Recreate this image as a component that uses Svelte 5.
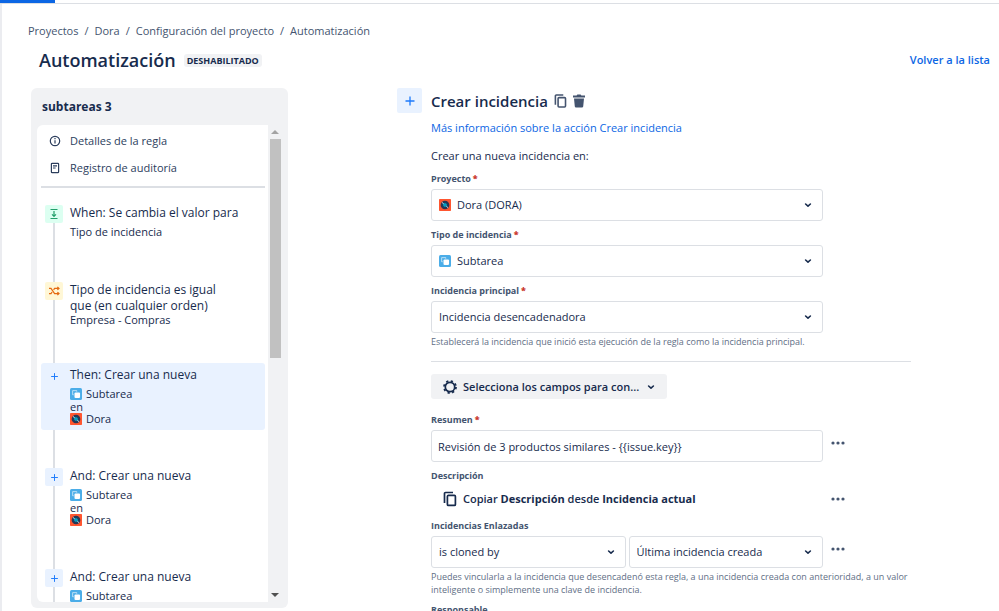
<script>
  const crumbs = ['Proyectos', 'Dora', 'Configuración del proyecto', 'Automatización'];

  const steps = [
    { kind: 'trigger', title: 'When: Se cambia el valor para', detail: 'Tipo de incidencia' },
    { kind: 'condition', title: 'Tipo de incidencia es igual que (en cualquier orden)', detail: 'Empresa - Compras' },
    { kind: 'action', title: 'Then: Crear una nueva', selected: true },
    { kind: 'action', title: 'And: Crear una nueva' },
    { kind: 'action', title: 'And: Crear una nueva' }
  ];

  let summary = $state('Revisión de 3 productos similares - {{issue.key}}');
</script>

{#snippet plus(size)}
  <svg width={size} height={size} viewBox="0 0 12 12" fill="none" stroke="#1d7afc" stroke-width="1.3" aria-hidden="true">
    <path d="M6 1.5v9M1.5 6h9" />
  </svg>
{/snippet}

{#snippet subtask()}
  <svg class="glyph" width="12" height="12" viewBox="0 0 16 16" aria-hidden="true">
    <rect width="16" height="16" rx="2" fill="#4bade8" />
    <path d="M9 5V3.5H3.5V9H5" fill="none" stroke="#fff" stroke-opacity="0.8" stroke-width="1" stroke-linejoin="round" />
    <rect x="6" y="6" width="7.4" height="7.4" rx="1.4" fill="#fff" />
  </svg>
{/snippet}

{#snippet avatar()}
  <svg class="glyph" width="12" height="12" viewBox="0 0 16 16" aria-hidden="true">
    <rect width="16" height="16" rx="1" fill="#ff5630" />
    <circle cx="8" cy="8" r="5.8" fill="#253858" />
    <path d="M4 4.6l2.6 2.2M9.6 9.4l2.4 2.2" stroke="#c1e9f5" stroke-width="1.3" />
    <circle cx="8" cy="8" r="2.4" fill="#00b8d9" />
    <circle cx="8" cy="8" r="0.7" fill="#253858" />
  </svg>
{/snippet}

{#snippet copy(w)}
  <svg width={w} height="16" viewBox="0 0 14 16" fill="none" stroke="currentColor" stroke-width="1.7" aria-hidden="true">
    <path d="M1.5 12V2.5a1 1 0 0 1 1-1H10" />
    <rect x="4.4" y="4.4" width="8" height="10" rx="1" />
  </svg>
{/snippet}

{#snippet chevron()}
  <svg class="chevron" width="8" height="8" viewBox="0 0 8 8" fill="none" stroke="currentColor" stroke-width="1.6" stroke-linecap="round" stroke-linejoin="round" aria-hidden="true">
    <path d="M1.6 3L4 5.2 6.4 3" />
  </svg>
{/snippet}

{#snippet more(name)}
  <button class="more" type="button" aria-label={name}>
    <svg width="14" height="4" viewBox="0 0 14 4" fill="#44546f" aria-hidden="true">
      <circle cx="2" cy="2" r="1.6" /><circle cx="7" cy="2" r="1.6" /><circle cx="12" cy="2" r="1.6" />
    </svg>
  </button>
{/snippet}

<div class="app">
  <div class="topbar"><span class="active-tab"></span></div>
  <div class="page">
    <nav aria-label="Ruta">
      {#each crumbs as crumb, i}
        {#if i}<span class="sep">/</span>{/if}
        <a href="#top">{crumb}</a>
      {/each}
    </nav>

    <header>
      <h1>Automatización</h1>
      <span class="badge">DESHABILITADO</span>
      <a class="back" href="#lista">Volver a la lista</a>
    </header>

    <div class="columns">
      <aside>
        <h2>subtareas 3</h2>
        <div class="scroller">
          <div class="rule">
            <a class="info" href="#detalles">
              <svg width="12" height="12" viewBox="0 0 12 12" fill="none" stroke="#2c3e5d" stroke-width="1.2" aria-hidden="true">
                <circle cx="6" cy="6" r="4.7" /><path d="M6 5.2v3.4M6 3.1v1.2" />
              </svg>
              Detalles de la regla
            </a>
            <a class="info" href="#registro">
              <svg width="12" height="12" viewBox="0 0 12 12" fill="none" stroke="#2c3e5d" stroke-width="1.2" aria-hidden="true">
                <rect x="2.4" y="1.3" width="7.2" height="9.4" rx="0.8" /><path d="M4 3.8h4M4 6h2.6" />
              </svg>
              Registro de auditoría
            </a>
            <ol>
              {#each steps as step}
                <li class={step.kind} class:selected={step.selected}>
                  <span class="tile">
                    {#if step.kind === 'trigger'}
                      <svg width="10" height="12" viewBox="0 0 10 12" fill="none" stroke="#22a06b" stroke-width="1.2" aria-hidden="true">
                        <path d="M1.5 1.5h7M1.5 10.5h7M5 3v5.2M3 6.4l2 2 2-2" />
                      </svg>
                    {:else if step.kind === 'condition'}
                      <svg width="12" height="12" viewBox="0 0 12 12" fill="none" stroke="#e56910" stroke-width="1.2" aria-hidden="true">
                        <path d="M1 3.4h2l3.6 5.2H11M1 8.6h2l1.1-1.6M5.6 4.9l1-1.5H11M9.4 1.9L11 3.4 9.4 4.9M9.4 7.1L11 8.6l-1.6 1.5" />
                      </svg>
                    {:else}
                      {@render plus(9)}
                    {/if}
                  </span>
                  <div class="body">
                    <h3>{step.title}</h3>
                    {#if step.detail}
                      <p class="detail">{step.detail}</p>
                    {:else}
                      <p class="type">{@render subtask()}Subtarea</p>
                      <p>en</p>
                      <p>{@render avatar()}Dora</p>
                    {/if}
                  </div>
                </li>
              {/each}
            </ol>
          </div>
          <div class="bar" aria-hidden="true">
            <span class="up"></span>
            <span class="thumb"></span>
            <span class="down"></span>
          </div>
        </div>
      </aside>

      <main>
        <div class="editor">
          <span class="bigtile">{@render plus(12)}</span>
          <form onsubmit={(e) => e.preventDefault()}>
            <div class="heading">
              <h2>Crear incidencia</h2>
              <button type="button" aria-label="Duplicar">{@render copy(13)}</button>
              <button type="button" aria-label="Eliminar">
                <svg width="12" height="14" viewBox="0 0 12 14" fill="currentColor" aria-hidden="true">
                  <path d="M0 1.6h3.6L4.4.6h3.2l.8 1H12v1.9H0zM1 4.4h10l-.8 8a1.2 1.2 0 0 1-1.2 1.1H3a1.2 1.2 0 0 1-1.2-1.1z" />
                </svg>
              </button>
            </div>
            <a class="learn" href="#ayuda">Más información sobre la acción Crear incidencia</a>
            <p class="intro">Crear una nueva incidencia en:</p>

            <div class="field">
              <label for="project">Proyecto<b>*</b></label>
              <div class="select icon">
                {@render avatar()}
                <select id="project"><option>Dora (DORA)</option></select>
                {@render chevron()}
              </div>
            </div>
            <div class="field">
              <label for="type">Tipo de incidencia<b>*</b></label>
              <div class="select icon">
                {@render subtask()}
                <select id="type"><option>Subtarea</option></select>
                {@render chevron()}
              </div>
            </div>
            <div class="field">
              <label for="parent">Incidencia principal<b>*</b></label>
              <div class="select">
                <select id="parent"><option>Incidencia desencadenadora</option></select>
                {@render chevron()}
              </div>
              <p class="help">Establecerá la incidencia que inició esta ejecución de la regla como la incidencia principal.</p>
            </div>

            <hr />

            <button class="picker" type="button">
              <svg width="14" height="14" viewBox="0 0 14 14" fill="none" stroke="currentColor" aria-hidden="true">
                <circle cx="7" cy="7" r="4.7" stroke-width="1.7" />
                <circle cx="7" cy="7" r="6" stroke-width="1.8" stroke-dasharray="2.2 2.51" stroke-dashoffset="-0.1" />
              </svg>
              <span>Selecciona los campos para con...</span>
              {@render chevron()}
            </button>

            <div class="field">
              <label for="summary">Resumen<b>*</b></label>
              <div class="row">
                <input id="summary" type="text" bind:value={summary} />
                {@render more('Opciones de Resumen')}
              </div>
            </div>
            <div class="field">
              <h4>Descripción</h4>
              <div class="row">
                <p class="copied">{@render copy(14)}<span>Copiar <strong>Descripción</strong> desde <strong>Incidencia actual</strong></span></p>
                {@render more('Opciones de Descripción')}
              </div>
            </div>
            <div class="field">
              <label for="link">Incidencias Enlazadas</label>
              <div class="row">
                <div class="pair">
                  <div class="select">
                    <select id="link"><option>is cloned by</option></select>
                    {@render chevron()}
                  </div>
                  <div class="select">
                    <select aria-label="Incidencia enlazada"><option>Última incidencia creada</option></select>
                    {@render chevron()}
                  </div>
                </div>
                {@render more('Opciones de Incidencias Enlazadas')}
              </div>
              <p class="help">Puedes vincularla a la incidencia que desencadenó esta regla, a una incidencia creada con anterioridad, a un valor inteligente o simplemente una clave de incidencia.</p>
            </div>
            <div class="field">
              <h4>Responsable</h4>
            </div>
          </form>
        </div>
      </main>
    </div>
  </div>
</div>

<style>
  :global(body) { margin: 0; background: #fff; }
  .app {
    box-sizing: border-box;
    display: flex;
    flex-direction: column;
    height: 100vh;
    overflow: hidden;
    font: 11px/14px "Open Sans", "Noto Sans", sans-serif;
    color: #172b4d;
  }
  .app :global(*) { box-sizing: border-box; }
  h1, h2, h3, h4, p, ol { margin: 0; padding: 0; font-weight: 400; }
  a { color: #0c66e4; text-decoration: none; }
  button, input, select { font: inherit; color: inherit; margin: 0; }
  button { display: flex; align-items: center; border: 0; padding: 0; background: none; }
  svg { display: block; flex: none; }

  .topbar { flex: none; height: 4px; border-bottom: 1px solid #dcdfe4; }
  .active-tab { display: block; width: 55px; height: 3px; background: #0c66e4; }
  .page {
    flex: 1;
    min-height: 0;
    display: flex;
    flex-direction: column;
    border-left: 2px solid #ebecf0;
    padding: 20px 0 3px 26px;
  }
  nav { display: flex; gap: 6px; }
  nav a, .sep { color: #44546f; }
  header { display: flex; align-items: center; height: 24px; margin: 10px 9px 16px 11px; }
  h1 { font-size: 18px; line-height: 24px; font-weight: 600; }
  .badge {
    margin-left: 8px;
    padding: 0 3px;
    border-radius: 3px;
    background: #f1f2f4;
    font-size: 9px;
    line-height: 13px;
    font-weight: 700;
  }
  .back { margin-left: auto; font-weight: 600; }

  .columns { flex: 1; min-height: 0; display: flex; }
  aside {
    display: flex;
    flex-direction: column;
    flex: 0 0 257px;
    margin-left: 3px;
    padding: 0 6px 6px;
    border-radius: 6px;
    background: #f1f2f4;
  }
  aside h2 { padding: 10px 5px 9px; font-size: 12px; line-height: 18px; font-weight: 700; }
  .scroller { flex: 1; min-height: 0; display: flex; }
  .rule { flex: 1; padding: 2px 3px 0 4px; border-radius: 6px 0 0 6px; background: #fff; overflow: hidden; }
  .info { display: flex; align-items: center; gap: 9px; height: 27px; padding-left: 8px; color: #2c3e5d; }
  ol { position: relative; list-style: none; margin-top: 5px; padding-top: 13px; border-top: 2px solid #dcdfe4; }
  ol::before { content: ""; position: absolute; top: 20px; bottom: 0; left: 12px; width: 2px; background: #dcdfe4; }
  li { position: relative; display: flex; gap: 7px; margin-bottom: 34px; padding: 4px 24px 5px 4px; border-radius: 3px; }
  li.condition { margin-bottom: 32px; padding-right: 36px; }
  li.selected { background: #e9f2ff; }
  .tile { flex: none; display: grid; place-items: center; width: 18px; height: 18px; border-radius: 2px; background: #e9f2ff; }
  .trigger .tile { background: #dcfff1; }
  .condition .tile { background: #fff7d6; }
  h3 { font-size: 12px; line-height: 16px; }
  .body p { display: flex; align-items: center; gap: 4px; line-height: 12px; }
  .body .type, .trigger .body .detail { margin-top: 4px; line-height: 14px; }

  .bar { flex: 0 0 14px; display: flex; flex-direction: column; align-items: center; padding: 5px 0; }
  .up, .down { border: 4px solid transparent; }
  .up { border-top: 0; border-bottom-color: #a3a3a3; }
  .down { margin-top: auto; border-bottom: 0; border-top-color: #505050; }
  .thumb { width: 11px; height: 47%; margin-top: 5px; background: #c1c1c1; }

  main { flex: 1; margin-left: 21px; }
  .editor { display: flex; gap: 9px; max-width: 514px; margin: 0 auto; }
  .bigtile { flex: none; display: grid; place-items: center; width: 25px; height: 25px; border-radius: 2px; background: #e9f2ff; }
  form { flex: 1; min-width: 0; }
  .heading { display: flex; align-items: center; gap: 6px; height: 25px; color: #44546f; }
  .heading h2 { font-size: 15px; line-height: 24px; font-weight: 600; color: #172b4d; }
  .learn { display: block; margin-top: 8px; }
  .intro { margin-top: 14px; }
  .field { margin-top: 8px; }
  .intro + .field { margin-top: 10px; }
  label, h4 { display: block; margin-bottom: 4px; font-size: 9px; line-height: 12px; font-weight: 700; color: #44546f; }
  label b { margin-left: 2px; color: #c9372c; }
  .select { position: relative; max-width: 392px; color: #172b4d; }
  select, input {
    display: block;
    width: 100%;
    height: 32px;
    border: 1px solid #dcdfe4;
    border-radius: 3px;
    background: #fff;
    appearance: none;
    padding: 0 24px 0 7px;
  }
  input { flex: 0 1 392px; min-width: 0; padding: 0 6px; }
  .icon select { padding-left: 25px; }
  .select > :global(.glyph) { position: absolute; left: 8px; top: 10px; }
  .select > :global(.chevron) { position: absolute; right: 11px; top: 12px; pointer-events: none; }
  .help { margin-top: 2px; font-size: 9px; line-height: 13px; color: #626f86; }
  hr { height: 1px; margin: 13px 0 12px; border: 0; background: #dcdfe4; }
  .picker { gap: 6px; height: 25px; padding: 0 12px; margin-bottom: 15px; border-radius: 3px; background: #f1f2f4; font-weight: 600; }
  .picker span { margin-right: 2px; }
  .row { display: flex; align-items: flex-start; }
  .more { flex: none; justify-content: center; width: 14px; height: 26px; margin-left: 8px; }
  .copied { flex: 0 1 392px; display: flex; align-items: center; gap: 6px; height: 26px; padding-left: 12px; font-weight: 600; }
  .copied strong { font-weight: 700; }
  .pair { flex: 0 1 392px; display: flex; gap: 3px; }
  .pair .select { flex: 1; }
</style>
